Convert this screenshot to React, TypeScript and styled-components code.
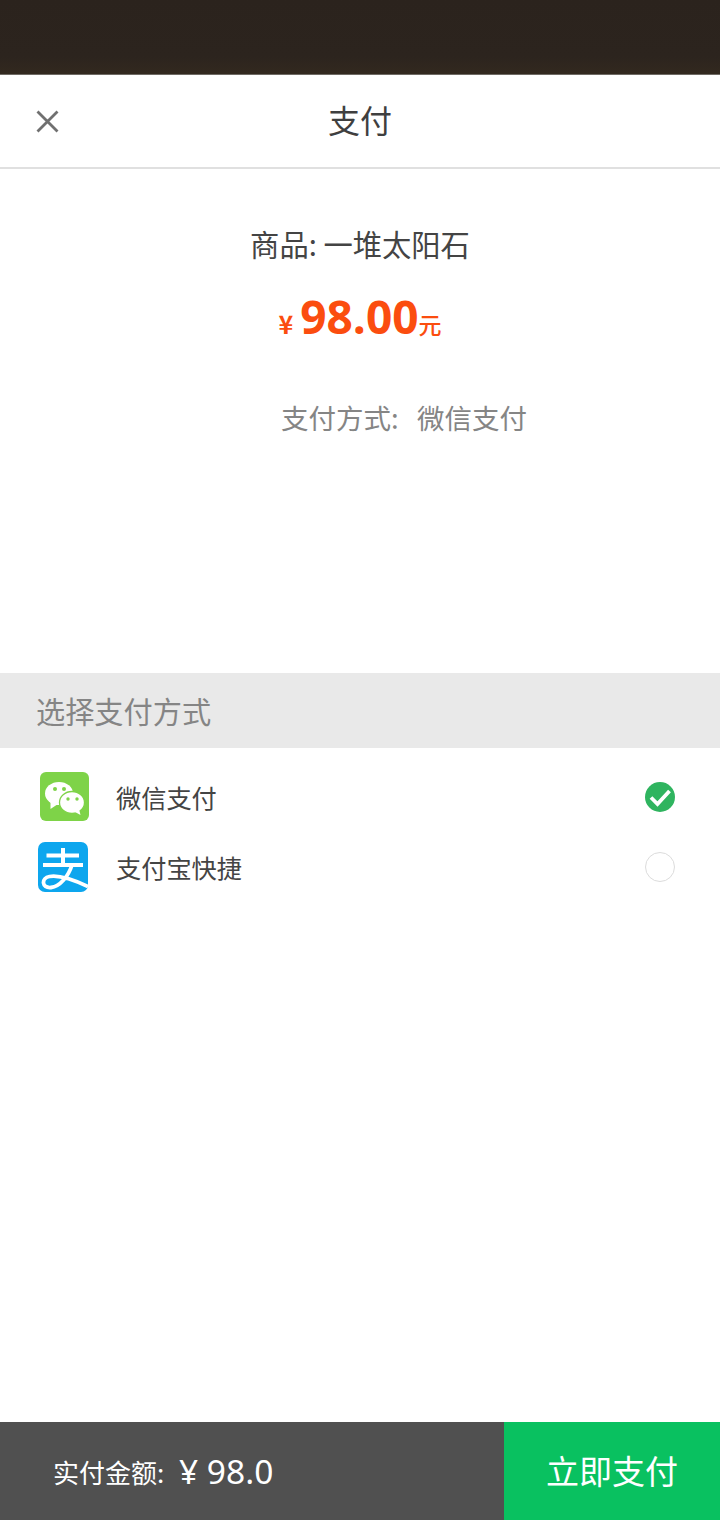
import React from "react";
import styled, { createGlobalStyle } from "styled-components";

const Global = createGlobalStyle`
  html, body { margin: 0; padding: 0; background: #fff; }
  body { font-family: "Noto Sans CJK SC", "Noto Sans", sans-serif; }
`;
const Page = styled.div`
  width: 720px; height: 1520px; display: flex; flex-direction: column; background: #fff; overflow: hidden;
`;
const TopStrip = styled.div`
  height: 75px; flex: none;
  background: linear-gradient(#2b231d 0%, #2c241e 75%, #33291f 100%);
  box-shadow: inset 0 -1px 0 #6f6a64;
`;
const Header = styled.header`
  height: 92px; flex: none; display: grid; grid-template-columns: 95px 1fr 95px; align-items: center;
  border-bottom: 2px solid #e0e0e0;
`;
const CloseBtn = styled.button`
  all: unset; display: flex; padding-left: 36px; color: #707070;
`;
const Title = styled.h1`
  margin: 0 0 4px; font-size: 32px; font-weight: 400; line-height: 44px; text-align: center; color: #3f3f3f;
`;
const Summary = styled.section`
  height: 504px; flex: none; display: flex; flex-direction: column; align-items: center;
  padding-top: 53px; box-sizing: border-box;
`;
const Product = styled.div`
  font-size: 29.3px; line-height: 42px; color: #444; white-space: pre;
`;
const Price = styled.div`
  margin-top: 22px; height: 60px; display: flex; align-items: baseline; color: #fb4d0f; line-height: 60px;
`;
const Cur = styled.span`
  font-size: 25px; font-weight: 700; margin-right: 7px;
`;
const Amount = styled.span`
  font-size: 46px; font-weight: 700; font-family: "Open Sans", sans-serif;
`;
const Unit = styled.span`
  font-size: 23px; font-weight: 500;
`;
const Method = styled.div`
  margin-top: 51px; padding-left: 88px; font-size: 27.5px; line-height: 40px; color: #858585; white-space: pre;
`;
const SectionHead = styled.div`
  height: 75px; flex: none; display: flex; align-items: center; padding: 0 0 2px 36px; box-sizing: border-box;
  background: #e9e9e9; color: #858585; font-size: 29.2px;
`;
const List = styled.div`
  flex: 1; display: flex; flex-direction: column; padding-top: 14px;
`;
const Row = styled.div`
  height: 70px; display: flex; align-items: center; padding: 0 45px 0 38px;
`;
const LogoSlot = styled.div`
  width: 78px; flex: none; display: flex; margin-top: -1px;
`;
const RowLabel = styled.div`
  flex: 1; font-size: 25.2px; color: #444; line-height: 40px;
`;
const Radio = styled.div`
  width: 28px; height: 28px; border: 1.5px solid #dcdcdc; border-radius: 50%; box-sizing: content-box;
`;
const Footer = styled.footer`
  height: 98px; flex: none; display: flex;
`;
const Total = styled.div`
  width: 504px; flex: none; display: flex; align-items: center; background: #505050; color: #fff;
  padding-left: 53px; box-sizing: border-box;
`;
const TotalLabel = styled.span`
  font-size: 26px; width: 126px;
`;
const TotalValue = styled.span`
  font-size: 33.5px; font-family: "Noto Sans", sans-serif;
`;
const PayBtn = styled.button`
  all: unset; flex: 1; display: flex; align-items: center; justify-content: center;
  background: #09c160; color: #fff; font-size: 33px; padding-bottom: 2px;
`;

const CloseIcon = () => (
  <svg width="23" height="23" viewBox="0 0 23 23" fill="none" stroke="currentColor" strokeWidth="2.800">
    <path d="M1.500 1.500 L21.500 21.500 M21.500 1.500 L1.500 21.500" />
  </svg>
);
const WeChat = () => (
  <svg width="50" height="50" viewBox="0 0 50 50" style={{ marginLeft: 1 }}>
    <rect x="1" y="0" width="49" height="49" rx="6" fill="#7ed348" />
    <ellipse cx="20" cy="21.500" rx="14" ry="11.500" fill="#fff" />
    <path d="M11.500 29 L11.500 37 L19 32 Z" fill="#fff" />
    <ellipse cx="33" cy="30.500" rx="12.500" ry="11" fill="#fff" stroke="#7ed348" strokeWidth="1.300" />
    <path d="M36 40 L41.500 43 L40 37 Z" fill="#fff" />
    <circle cx="16" cy="17" r="2" fill="#7ed348" /><circle cx="25" cy="17" r="2" fill="#7ed348" />
    <circle cx="29" cy="27" r="1.700" fill="#7ed348" /><circle cx="38" cy="27" r="1.700" fill="#7ed348" />
  </svg>
);
const Alipay = () => (
  <svg width="50" height="50" viewBox="0 0 50 50">
    <rect x="0" y="0" width="50" height="50" rx="7" fill="#0da6ee" />
    <path d="M8.500 13.500H41 M25 6V23 M5 23H45" fill="none" stroke="#fff" strokeWidth="4" />
    <path d="M34 23C30.500 34 22 44.500 13 45.500 3.500 46.500 3 36 11.500 34.500 21 32.800 34 37 50 44.500" fill="none" stroke="#fff" strokeWidth="3.800" />
  </svg>
);
const Checked = () => (
  <svg width="30" height="30" viewBox="0 0 30 30">
    <circle cx="15" cy="15" r="15" fill="#2fb45f" />
    <path d="M6 15.500 L12.500 22 L24.500 9" fill="none" stroke="#fff" strokeWidth="3.800" />
  </svg>
);

export default function App() {
  return (
    <Page>
      <Global />
      <TopStrip />
      <Header>
        <CloseBtn aria-label="close"><CloseIcon /></CloseBtn>
        <Title>支付</Title>
      </Header>
      <Summary>
        <Product>商品: 一堆太阳石</Product>
        <Price><Cur>¥</Cur><Amount>98.00</Amount><Unit>元</Unit></Price>
        <Method>支付方式:   微信支付</Method>
      </Summary>
      <SectionHead>选择支付方式</SectionHead>
      <List>
        <Row><LogoSlot><WeChat /></LogoSlot><RowLabel>微信支付</RowLabel><Checked /></Row>
        <Row><LogoSlot><Alipay /></LogoSlot><RowLabel>支付宝快捷</RowLabel><Radio /></Row>
      </List>
      <Footer>
        <Total><TotalLabel>实付金额:</TotalLabel><TotalValue>¥ 98.0</TotalValue></Total>
        <PayBtn>立即支付</PayBtn>
      </Footer>
    </Page>
  );
}
